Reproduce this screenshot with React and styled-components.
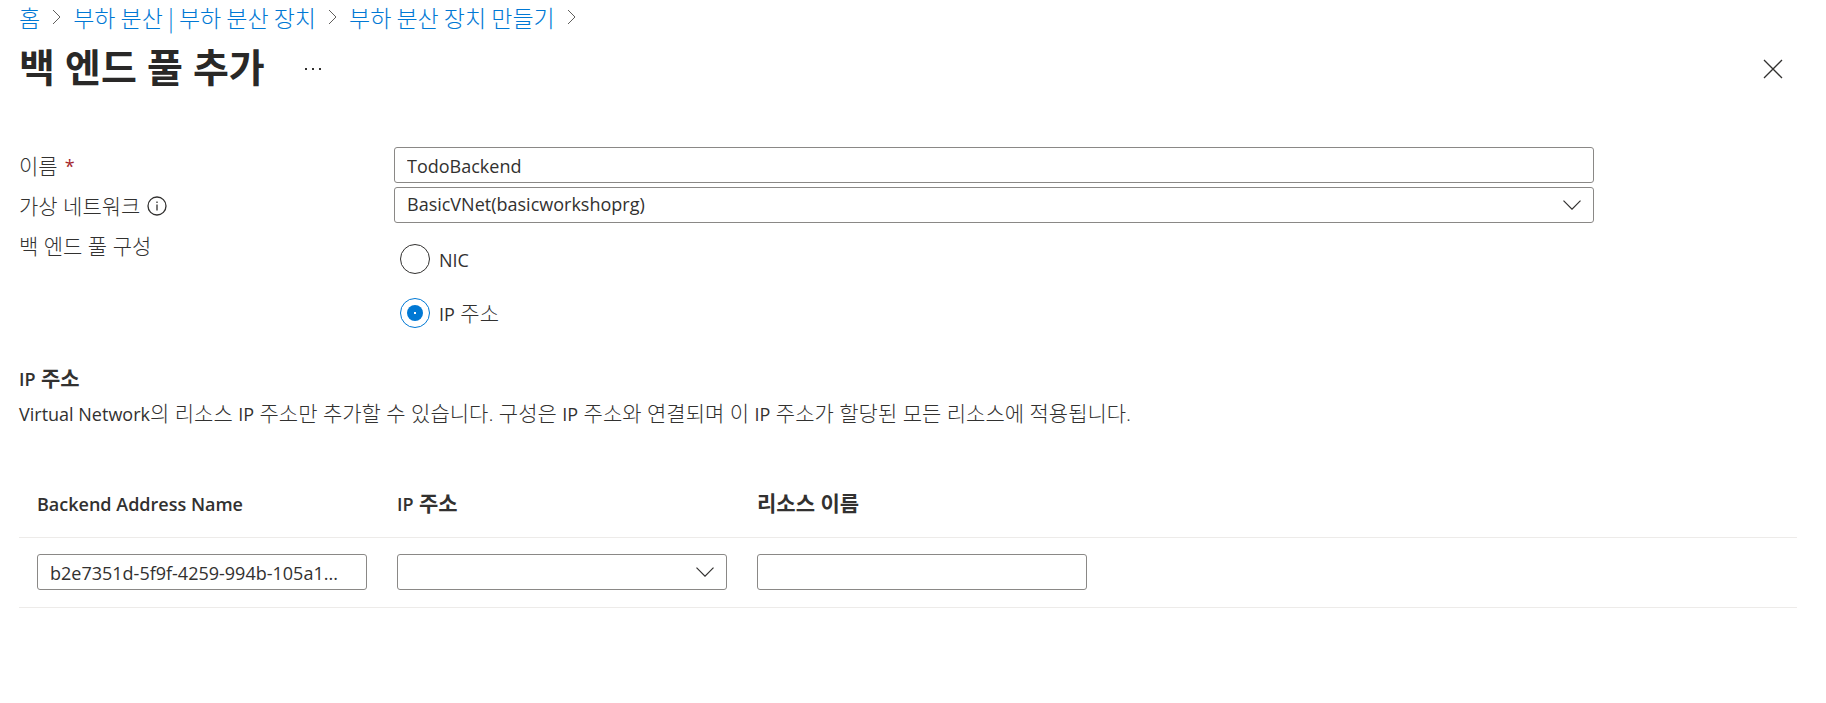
import React, { useState } from "react";
import styled, { createGlobalStyle } from "styled-components";

const color = {
  text: "#323130",
  link: "#0078d4",
  border: "#8a8886",
  rule: "#edebe9",
  required: "#a4262c",
};

const font = {
  latin: `"Open Sans", "Noto Sans CJK KR", sans-serif`,
  korean: `"Noto Sans CJK KR", "Open Sans", sans-serif`,
};

const GlobalStyle = createGlobalStyle`
  *, *::before, *::after { box-sizing: border-box; }
  body {
    margin: 0;
    background: #ffffff;
    color: ${color.text};
    font: 300 21px/24px ${font.latin};
  }
  input, select, button { font: inherit; color: inherit; }
`;

const Page = styled.div`
  padding: 5px 29px 24px 19px;
`;

/* Latin runs are set smaller than the Hangul around them */
const Latin = styled.span`
  font-size: 18px;
  line-height: 1;
  font-weight: ${(p) => (p.$strong ? 600 : 400)};
`;

const Breadcrumb = styled.ol`
  display: flex;
  align-items: center;
  gap: 12px;
  margin: 0;
  padding: 0;
  list-style: none;
  font-family: ${font.korean};
  font-size: 23px;
`;

const Crumb = styled.li`
  display: flex;
  align-items: center;
  gap: 12px;
  white-space: nowrap;
`;

const CrumbLink = styled.a`
  color: ${color.link};
  text-decoration: none;
`;

const TitleBar = styled.header`
  display: flex;
  align-items: center;
  margin-top: 16px;
  height: 48px;
`;

const Title = styled.h1`
  margin: 0;
  font-size: 39px;
  line-height: 44px;
  height: 48px;
  font-weight: 700;
  color: #292827;
  white-space: nowrap;
`;

const IconButton = styled.button`
  display: flex;
  align-items: center;
  justify-content: center;
  width: 36px;
  height: 36px;
  padding: 0;
  border: 0;
  background: transparent;
  margin-left: ${(p) => (p.$end ? "auto" : "30px")};
  margin-right: ${(p) => (p.$end ? "6px" : "0")};
`;

const Form = styled.form`
  margin-top: 54px;
`;

const Field = styled.div`
  display: grid;
  grid-template-columns: 375px minmax(0, 1fr);
  max-width: 1575px;
  margin-bottom: 2px;
`;

const FieldLabel = styled.div`
  display: flex;
  align-items: center;
  gap: 7px;
  height: 38px;
`;

const Required = styled.span`
  color: ${color.required};
  font-size: 18px;
  font-weight: 400;
`;

const TextBox = styled.input`
  display: block;
  width: 100%;
  height: 36px;
  padding: 1px 12px 0;
  border: 1px solid ${color.border};
  border-radius: 3px;
  background: #ffffff;
  font-size: 18px;
  font-weight: 400;
  text-overflow: ellipsis;
`;

const SelectWrap = styled.div`
  position: relative;
`;

const SelectBox = styled.select`
  display: block;
  width: 100%;
  height: 36px;
  padding: 0 48px 2px 12px;
  border: 1px solid ${color.border};
  border-radius: 3px;
  background: #ffffff;
  font-size: 18px;
  font-weight: 400;
  appearance: none;
`;

const SelectArrow = styled.span`
  position: absolute;
  top: 0;
  right: 13px;
  height: 36px;
  display: flex;
  align-items: center;
  pointer-events: none;
`;

const RadioGroup = styled.div`
  display: flex;
  flex-direction: column;
  gap: 24px;
  padding: 17px 6px 0;
`;

const RadioLabel = styled.label`
  display: flex;
  align-items: center;
  gap: 9px;
  height: 30px;
`;

const Radio = styled.input`
  appearance: none;
  display: grid;
  place-items: center;
  width: 30px;
  height: 30px;
  margin: 0;
  border: 1px solid ${color.text};
  border-radius: 50%;

  &:checked {
    border-color: ${color.link};
  }
  &:checked::before {
    content: "";
    width: 16px;
    height: 16px;
    border-radius: 50%;
    background: radial-gradient(circle, #ffffff 1px, ${color.link} 1px);
  }
`;

const SectionTitle = styled.h2`
  margin: 38px 0 0;
  font-size: 21px;
  line-height: 24px;
  font-weight: 600;
`;

const Description = styled.p`
  margin: 11px 0 0;
`;

const Table = styled.table`
  width: 100%;
  margin-top: 44px;
  border-collapse: collapse;
  table-layout: fixed;
`;

const HeadCell = styled.th`
  width: ${(p) => (p.$spacer ? "auto" : "360px")};
  height: 68px;
  padding: 0 12px 0 18px;
  border-bottom: 1px solid ${color.rule};
  text-align: left;
  font-weight: 600;
`;

const Cell = styled.td`
  height: 70px;
  padding: 0 12px 0 18px;
  border-bottom: 1px solid ${color.rule};
`;

function CrumbChevron() {
  return (
    <svg width="9" height="16" viewBox="0 0 9 16" fill="none" stroke="#605e5c" aria-hidden="true">
      <path d="M1 1l7 7-7 7" />
    </svg>
  );
}

function DownChevron() {
  return (
    <svg width="18" height="10" viewBox="0 0 18 10" fill="none" stroke={color.text} strokeWidth="1.2" aria-hidden="true">
      <path d="M.5 .7l8.5 8.5 8.5-8.5" />
    </svg>
  );
}

function InfoIcon() {
  return (
    <svg width="20" height="20" viewBox="0 0 20 20" fill="none" stroke={color.text} strokeWidth="1.3" role="img" aria-label="정보">
      <circle cx="10" cy="10" r="9" />
      <path d="M10 8.5v6M10 5.5v1.6" />
    </svg>
  );
}

function Dropdown({ id, options, ...rest }) {
  return (
    <SelectWrap>
      <SelectBox id={id} {...rest}>
        {options.map((o) => (
          <option key={o}>{o}</option>
        ))}
      </SelectBox>
      <SelectArrow>
        <DownChevron />
      </SelectArrow>
    </SelectWrap>
  );
}

/* Splits a string so that its Latin words get their own size */
function Mixed({ children, strong }) {
  return children
    .split(/([A-Za-z]+(?: [A-Za-z]+)*)/)
    .map((part, i) =>
      i % 2 ? (
        <Latin key={i} $strong={strong}>
          {part}
        </Latin>
      ) : (
        part
      )
    );
}

const crumbs = ["홈", "부하 분산 | 부하 분산 장치", "부하 분산 장치 만들기"];
const modes = ["NIC", "IP 주소"];
const columns = ["Backend Address Name", "IP 주소", "리소스 이름"];

export default function App() {
  const [mode, setMode] = useState("IP 주소");

  return (
    <Page>
      <GlobalStyle />
      <nav>
        <Breadcrumb>
          {crumbs.map((c) => (
            <Crumb key={c}>
              <CrumbLink href="#">{c}</CrumbLink>
              <CrumbChevron />
            </Crumb>
          ))}
        </Breadcrumb>
      </nav>
      <TitleBar>
        <Title>백 엔드 풀 추가</Title>
        <IconButton type="button" aria-label="더 보기">
          <svg width="18" height="4" viewBox="0 0 18 4" fill={color.text} aria-hidden="true">
            <path d="M1 1h2v2h-2zM8 1h2v2h-2zM15 1h2v2h-2z" />
          </svg>
        </IconButton>
        <IconButton type="button" aria-label="닫기" $end>
          <svg width="20" height="20" viewBox="0 0 20 20" fill="none" stroke={color.text} strokeWidth="1.3" aria-hidden="true">
            <path d="M1 1l18 18M19 1L1 19" />
          </svg>
        </IconButton>
      </TitleBar>

      <Form>
        <Field>
          <FieldLabel as="label" htmlFor="pool-name">
            이름 <Required>*</Required>
          </FieldLabel>
          <TextBox id="pool-name" defaultValue="TodoBackend" />
        </Field>
        <Field>
          <FieldLabel>
            <label htmlFor="vnet">가상 네트워크</label>
            <InfoIcon />
          </FieldLabel>
          <Dropdown id="vnet" options={["BasicVNet(basicworkshoprg)"]} />
        </Field>
        <Field>
          <FieldLabel id="mode-label">백 엔드 풀 구성</FieldLabel>
          <RadioGroup role="radiogroup" aria-labelledby="mode-label">
            {modes.map((m) => (
              <RadioLabel key={m}>
                <Radio type="radio" name="mode" checked={mode === m} onChange={() => setMode(m)} />
                <span>
                  <Mixed>{m}</Mixed>
                </span>
              </RadioLabel>
            ))}
          </RadioGroup>
        </Field>

        <SectionTitle>
          <Mixed strong>IP 주소</Mixed>
        </SectionTitle>
        <Description>
          <Mixed>
            Virtual Network의 리소스 IP 주소만 추가할 수 있습니다. 구성은 IP 주소와 연결되며 이 IP 주소가 할당된 모든 리소스에 적용됩니다.
          </Mixed>
        </Description>

        <Table>
          <thead>
            <tr>
              {columns.map((c) => (
                <HeadCell key={c}>
                  <Mixed strong>{c}</Mixed>
                </HeadCell>
              ))}
              <HeadCell as="td" $spacer />
            </tr>
          </thead>
          <tbody>
            <tr>
              <Cell>
                <TextBox aria-label="Backend Address Name" defaultValue="b2e7351d-5f9f-4259-994b-105a1..." />
              </Cell>
              <Cell>
                <Dropdown aria-label="IP 주소" options={[""]} />
              </Cell>
              <Cell>
                <TextBox aria-label="리소스 이름" />
              </Cell>
              <Cell />
            </tr>
          </tbody>
        </Table>
      </Form>
    </Page>
  );
}
